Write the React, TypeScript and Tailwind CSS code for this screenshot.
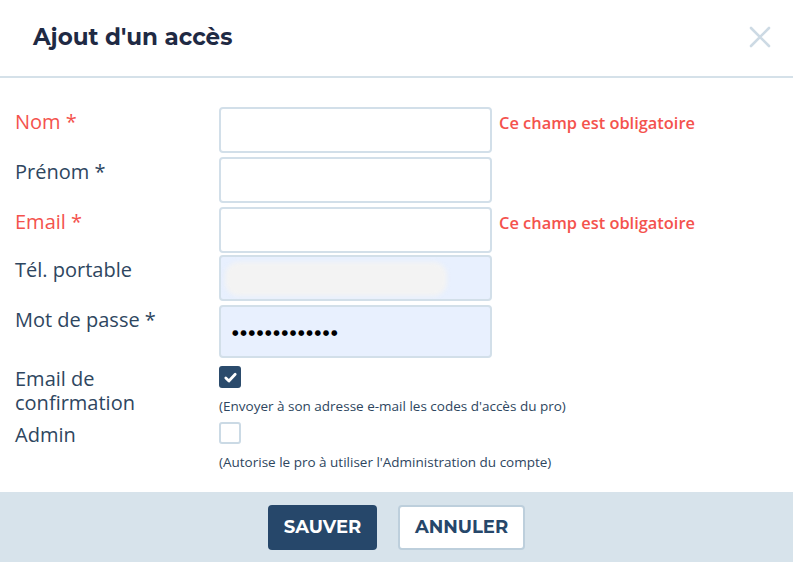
import { useState } from 'react';

const labelCls = 'w-[219px] shrink-0 pl-[15px] text-[20px] leading-[24px]';
const inputCls = 'w-[273px] shrink-0 rounded-[4px] border-2 border-[#d2dfe9]';
const errorCls = 'ml-[7px] pt-[5px] text-[16.4px] leading-[22px] font-semibold text-[#f4524d]';

function Field({ label, error, height = 'h-[46px]', fill = 'bg-white', className = '', children }: {
    label: string;
    error?: boolean;
    height?: string;
    fill?: string;
    className?: string;
    children?: React.ReactNode;
}) {
    return (
        <div className={`flex items-start ${className}`}>
            <div className={`${labelCls} pt-[3px] ${error ? 'text-[#f4524d]' : 'text-[#2e4660]'}`}>{label}</div>
            <div className={`${inputCls} ${height} ${fill} relative flex items-center overflow-hidden`}>{children}</div>
            {error && <div className={errorCls}>Ce champ est obligatoire</div>}
        </div>
    );
}

function Checkbox({ checked, onClick }: { checked: boolean; onClick: () => void }) {
    return (
        <button
            onClick={onClick}
            className={`w-[22px] h-[22px] rounded-[3px] flex items-center justify-center ${checked ? 'bg-[#2b4b6c]' : 'border-2 border-[#cbdae5] bg-white'}`}
        >
            {checked && (
                <svg viewBox="0 0 16 16" className="w-[15px] h-[15px]">
                    <path d="M3 8.6l3.3 3.1L13 4.6" fill="none" stroke="white" strokeWidth="3" strokeLinecap="round" strokeLinejoin="round" />
                </svg>
            )}
        </button>
    );
}

export default function App() {
    const [confirmMail, setConfirmMail] = useState(true);
    const [admin, setAdmin] = useState(false);

    return (
        <div className="w-[793px] h-[562px] bg-white flex flex-col font-['Open_Sans',sans-serif] overflow-hidden">
            {/* Header */}
            <div className="h-[78px] shrink-0 flex items-center justify-between pl-[33px] pr-[22px] border-b-2 border-[#d5e1e9]">
                <h1 className="font-['Montserrat','Noto_Sans',sans-serif] font-bold text-[23px] text-[#1f2a44] -mt-[2px]">Ajout d'un accès</h1>
                <svg viewBox="0 0 22 22" className="w-[22px] h-[22px] -mt-[3px]">
                    <path d="M2 2L20 20M20 2L2 20" stroke="#cddae4" strokeWidth="2.6" strokeLinecap="round" />
                </svg>
            </div>

            {/* Form */}
            <div className="flex-1 flex flex-col pt-[29px] gap-[4px]">
                <Field label="Nom *" error />
                <Field label="Prénom *" />
                <Field label="Email *" error />
                <Field label="Tél. portable" fill="bg-[#e8f0fe]" className="-mt-[2px]">
                    <div className="absolute left-[4px] top-[5px] w-[222px] h-[34px] rounded-[14px] bg-[#f3f3f3] blur-[2px]" />
                </Field>
                <Field label="Mot de passe *" fill="bg-[#e8f0fe]" height="h-[53px]">
                    <span className="pl-[11px] text-[7.5px] tracking-[1.7px] text-black font-['DejaVu_Sans',sans-serif] mt-[2px]">●●●●●●●●●●●●●</span>
                </Field>

                <div className="flex items-start mt-[4px]">
                    <div className={`${labelCls} pt-[1px] text-[#2e4660]`}>
                        <div className="h-[24px]">Email de</div>
                        <div className="h-[24px]">confirmation</div>
                    </div>
                    <div className="flex flex-col">
                        <Checkbox checked={confirmMail} onClick={() => setConfirmMail(!confirmMail)} />
                        <p className="mt-[10px] text-[13.5px] leading-[16px] text-[#2e4660]">(Envoyer à son adresse e-mail les codes d'accès du pro)</p>
                    </div>
                </div>
                <div className="flex items-start mt-[4px]">
                    <div className={`${labelCls} text-[#2e4660]`}>Admin</div>
                    <div className="flex flex-col -mt-[1px]">
                        <Checkbox checked={admin} onClick={() => setAdmin(!admin)} />
                        <p className="mt-[10px] text-[13.5px] leading-[16px] text-[#2e4660]">(Autorise le pro à utiliser l'Administration du compte)</p>
                    </div>
                </div>
            </div>

            {/* Footer */}
            <div className="h-[70px] shrink-0 bg-[#d7e3eb] flex items-center justify-center gap-[21px]">
                <button className="w-[109px] h-[45px] rounded-[4px] bg-[#26476a] text-white font-['Montserrat','Noto_Sans',sans-serif] font-bold text-[18px]">SAUVER</button>
                <button className="w-[127px] h-[45px] rounded-[4px] bg-white border-2 border-[#bdcfdc] text-[#26476a] font-['Montserrat','Noto_Sans',sans-serif] font-bold text-[18px]">ANNULER</button>
            </div>
        </div>
    );
}
